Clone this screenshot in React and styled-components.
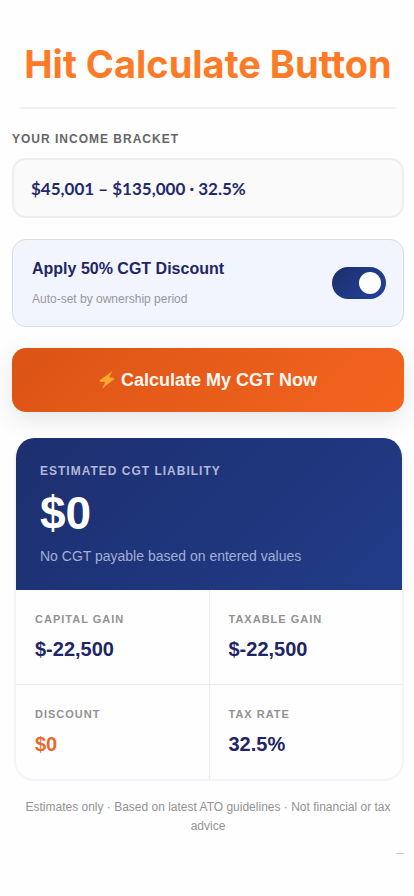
import { useState } from "react";
import styled, { createGlobalStyle } from "styled-components";

export default function App() {
  const [discount, setDiscount] = useState(true);

  return (
    <>
      <GlobalStyle />
      <Page>
        <Title>Hit Calculate Button</Title>
        <Divider />
        <Form onSubmit={(e) => e.preventDefault()}>
          <Label htmlFor="bracket">YOUR INCOME BRACKET</Label>
          <Select id="bracket" defaultValue="32.5">
            <option value="19">$18,201 – $45,000 · 19%</option>
            <option value="32.5">$45,001 – $135,000 · 32.5%</option>
            <option value="37">$135,001 – $190,000 · 37%</option>
          </Select>
          <DiscountCard htmlFor="discount">
            <DiscountText>
              <DiscountTitle>Apply 50% CGT Discount</DiscountTitle>
              <DiscountHint>Auto-set by ownership period</DiscountHint>
            </DiscountText>
            <Toggle
              id="discount"
              type="checkbox"
              checked={discount}
              onChange={(e) => setDiscount(e.target.checked)}
            />
          </DiscountCard>
          <CalculateButton type="submit">
            <Bolt />
            Calculate My CGT Now
          </CalculateButton>
        </Form>
        <Results>
          <Liability>
            <LiabilityLabel>ESTIMATED CGT LIABILITY</LiabilityLabel>
            <LiabilityValue>$0</LiabilityValue>
            <LiabilityNote>No CGT payable based on entered values</LiabilityNote>
          </Liability>
          <Stats>
            <Stat>
              <StatLabel>CAPITAL GAIN</StatLabel>
              <StatValue>$-22,500</StatValue>
            </Stat>
            <Stat>
              <StatLabel>TAXABLE GAIN</StatLabel>
              <StatValue>$-22,500</StatValue>
            </Stat>
            <Stat>
              <StatLabel>DISCOUNT</StatLabel>
              <StatValue $accent>$0</StatValue>
            </Stat>
            <Stat>
              <StatLabel>TAX RATE</StatLabel>
              <StatValue>32.5%</StatValue>
            </Stat>
          </Stats>
        </Results>
        <Disclaimer>
          Estimates only · Based on latest ATO guidelines · Not financial or tax
          advice
        </Disclaimer>
        <EndMark />
      </Page>
    </>
  );
}

function Bolt() {
  return (
    <svg width="16" height="18" viewBox="0 0 16 18" aria-hidden="true">
      <path d="M13.2 0.2 L0.4 9.6 L1.2 10.8 L6.2 11 L3 17.8 L15.6 8 L15 6.8 L10.2 6.6 Z" fill="#fda62f" />
    </svg>
  );
}

const GlobalStyle = createGlobalStyle`
  * {
    box-sizing: border-box;
  }

  body {
    margin: 0;
    background-color: #fefefe;
    font-family: "Liberation Sans", Arial, sans-serif;
  }
`;

const Page = styled.main`
  display: flex;
  flex-direction: column;
  padding: 36px 10px 40px 12px;
`;

const Title = styled.h1`
  margin: 0;
  font-family: Inter, sans-serif;
  font-weight: 700;
  font-size: 38px;
  line-height: 56px;
  text-align: center;
  white-space: nowrap;
  color: #fd7b26;
`;

const Divider = styled.div`
  height: 2px;
  margin: 15px 4px 0;
  background: linear-gradient(90deg, transparent, #efefef 2%, #efefef 98%, transparent);
`;

const Form = styled.form`
  display: flex;
  flex-direction: column;
`;

const Label = styled.label`
  margin: 22px 0 11px;
  font-weight: 700;
  font-size: 12px;
  line-height: 16px;
  letter-spacing: 1px;
  color: #666666;
`;

const Select = styled.select`
  appearance: none;
  width: 100%;
  height: 60px;
  padding: 0 17px;
  border: 2px solid #eeeeef;
  border-radius: 14px;
  background-color: #fafafa;
  font-family: Lato, sans-serif;
  font-weight: 700;
  font-size: 17px;
  color: #1f2a6b;
`;

const DiscountCard = styled.label`
  display: flex;
  align-items: center;
  justify-content: space-between;
  height: 88px;
  margin-top: 21px;
  padding: 0 17px 0 19px;
  border: 1px solid #d9dbe6;
  border-radius: 14px;
  background-color: #f2f5fe;
`;

const DiscountText = styled.span`
  display: flex;
  flex-direction: column;
  gap: 12px;
`;

const DiscountTitle = styled.span`
  font-weight: 700;
  font-size: 16px;
  line-height: 20px;
  color: #1f2666;
`;

const DiscountHint = styled.span`
  font-size: 12px;
  line-height: 16px;
  color: #96979e;
`;

const Toggle = styled.input`
  appearance: none;
  display: flex;
  align-items: center;
  justify-content: ${(props) => (props.checked ? "flex-end" : "flex-start")};
  flex-shrink: 0;
  width: 54px;
  height: 32px;
  margin: 0;
  padding: 0 5px;
  border-radius: 16px;
  background: ${(props) =>
    props.checked ? "linear-gradient(135deg, #1c2f6d, #24429a)" : "#c8cbd6"};

  &::before {
    content: "";
    width: 22px;
    height: 22px;
    border-radius: 50%;
    background-color: #ffffff;
  }
`;

const CalculateButton = styled.button`
  display: flex;
  align-items: center;
  justify-content: center;
  gap: 6px;
  height: 64px;
  margin-top: 21px;
  border: none;
  border-radius: 14px;
  background: linear-gradient(135deg, #db5415, #f4641f);
  box-shadow: 0 8px 24px rgba(0, 0, 0, 0.1);
  font-family: inherit;
  font-weight: 700;
  font-size: 18px;
  color: #fff8f2;
`;

const Results = styled.section`
  position: relative;
  margin: 26px 0 0 2px;
  border: 2px solid #f3f5f8;
  border-top: none;
  border-radius: 20px;
  background-color: #fefefe;
  overflow: hidden;
`;

const Liability = styled.div`
  padding: 24px;
  background: linear-gradient(135deg, #1d2f6f, #213c88);
`;

const LiabilityLabel = styled.div`
  font-weight: 700;
  font-size: 12px;
  line-height: 18px;
  letter-spacing: 1px;
  color: #aeb8da;
`;

const LiabilityValue = styled.div`
  margin: 6px 0;
  font-weight: 700;
  font-size: 46px;
  line-height: 54px;
  color: #ffffff;
`;

const LiabilityNote = styled.div`
  font-size: 14px;
  line-height: 20px;
  color: #a2afd6;
`;

const Stats = styled.div`
  display: grid;
  grid-template-columns: 1fr 1fr;
  gap: 1px;
  background-color: #ebecee;
`;

const Stat = styled.div`
  display: flex;
  flex-direction: column;
  gap: 10px;
  padding: 21px 19px 23px;
  background-color: #fefefe;
`;

const StatLabel = styled.div`
  font-weight: 700;
  font-size: 11px;
  line-height: 16px;
  letter-spacing: 1px;
  color: #929292;
`;

const StatValue = styled.div`
  font-weight: 700;
  font-size: 20px;
  line-height: 24px;
  color: ${(props) => (props.$accent ? "#e66a30" : "#1f2666")};
`;

const Disclaimer = styled.p`
  margin: 17px 0 0;
  font-size: 12px;
  line-height: 19px;
  text-align: center;
  color: #939393;
`;

const EndMark = styled.div`
  align-self: flex-end;
  width: 8px;
  height: 1px;
  margin-top: 17px;
  background-color: #dcc8b4;
`;
